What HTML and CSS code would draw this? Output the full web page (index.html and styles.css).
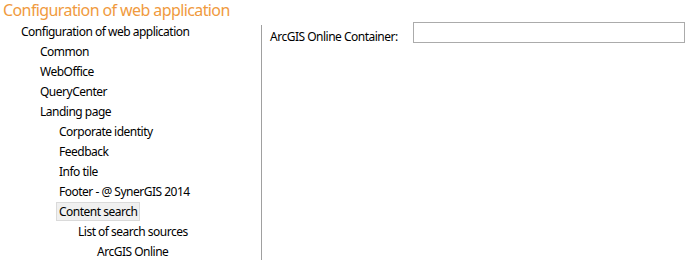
FILE: index.html
```html
<!DOCTYPE html>
<html>
<head>
  <title>Configuration of web application</title>
  <link rel="stylesheet" href="styles.css">
</head>
<body>
<h1 class="page-title">Configuration of web application</h1>
<div class="layout">
  <div class="tree">
    <div class="node lvl0">Configuration of web application</div>
    <div class="node lvl1">Common</div>
    <div class="node lvl1">WebOffice</div>
    <div class="node lvl1">QueryCenter</div>
    <div class="node lvl1">Landing page</div>
    <div class="node lvl2">Corporate identity</div>
    <div class="node lvl2">Feedback</div>
    <div class="node lvl2">Info tile</div>
    <div class="node lvl2">Footer - @ SynerGIS 2014</div>
    <div class="node lvl2"><span class="selected">Content search</span></div>
    <div class="node lvl3">List of search sources</div>
    <div class="node lvl4">ArcGIS Online</div>
  </div>
  <div class="panel">
    <div class="field">
      <label for="container">ArcGIS Online Container:</label>
      <input type="text" id="container" />
    </div>
  </div>
</div>
</body>
</html>
```

FILE: styles.css
```css
body {
  margin: 0;
  font-family: "Noto Sans", "Open Sans", sans-serif;
  font-size: 12px;
  letter-spacing: -0.5px;
  color: #000;
  background: #fff;
}
.page-title {
  margin: 0;
  padding-left: 3px;
  height: 22px;
  line-height: 20px;
  font-size: 16px;
  letter-spacing: -0.6px;
  font-weight: normal;
  color: #f09a3e;
}
.layout {
  display: flex;
}
.tree {
  width: 261px;
  box-sizing: border-box;
}
.node {
  height: 20px;
  line-height: 20px;
  white-space: nowrap;
}
.lvl0 { padding-left: 21px; }
.lvl1 { padding-left: 40px; }
.lvl2 { padding-left: 59px; }
.lvl3 { padding-left: 78px; }
.lvl4 { padding-left: 97px; }
.selected {
  display: inline-block;
  margin-left: -3px;
  padding: 0 2px;
  height: 17px;
  line-height: 17px;
  background: #f0f0f0;
  border: 1px solid #dadada;
}
.panel {
  flex: 1;
  margin-top: 3px;
  border-left: 1px solid #a0a0a0;
  padding-left: 8px;
  height: 235px;
}
.field {
  display: flex;
  align-items: flex-start;
}
.field label {
  width: 143px;
  padding-top: 3px;
}
.field input {
  width: 272px;
  height: 21px;
  box-sizing: border-box;
  margin: -3px 0 0 0;
  border: 1px solid #ababab;
  padding: 0 4px;
  font: inherit;
}
```
